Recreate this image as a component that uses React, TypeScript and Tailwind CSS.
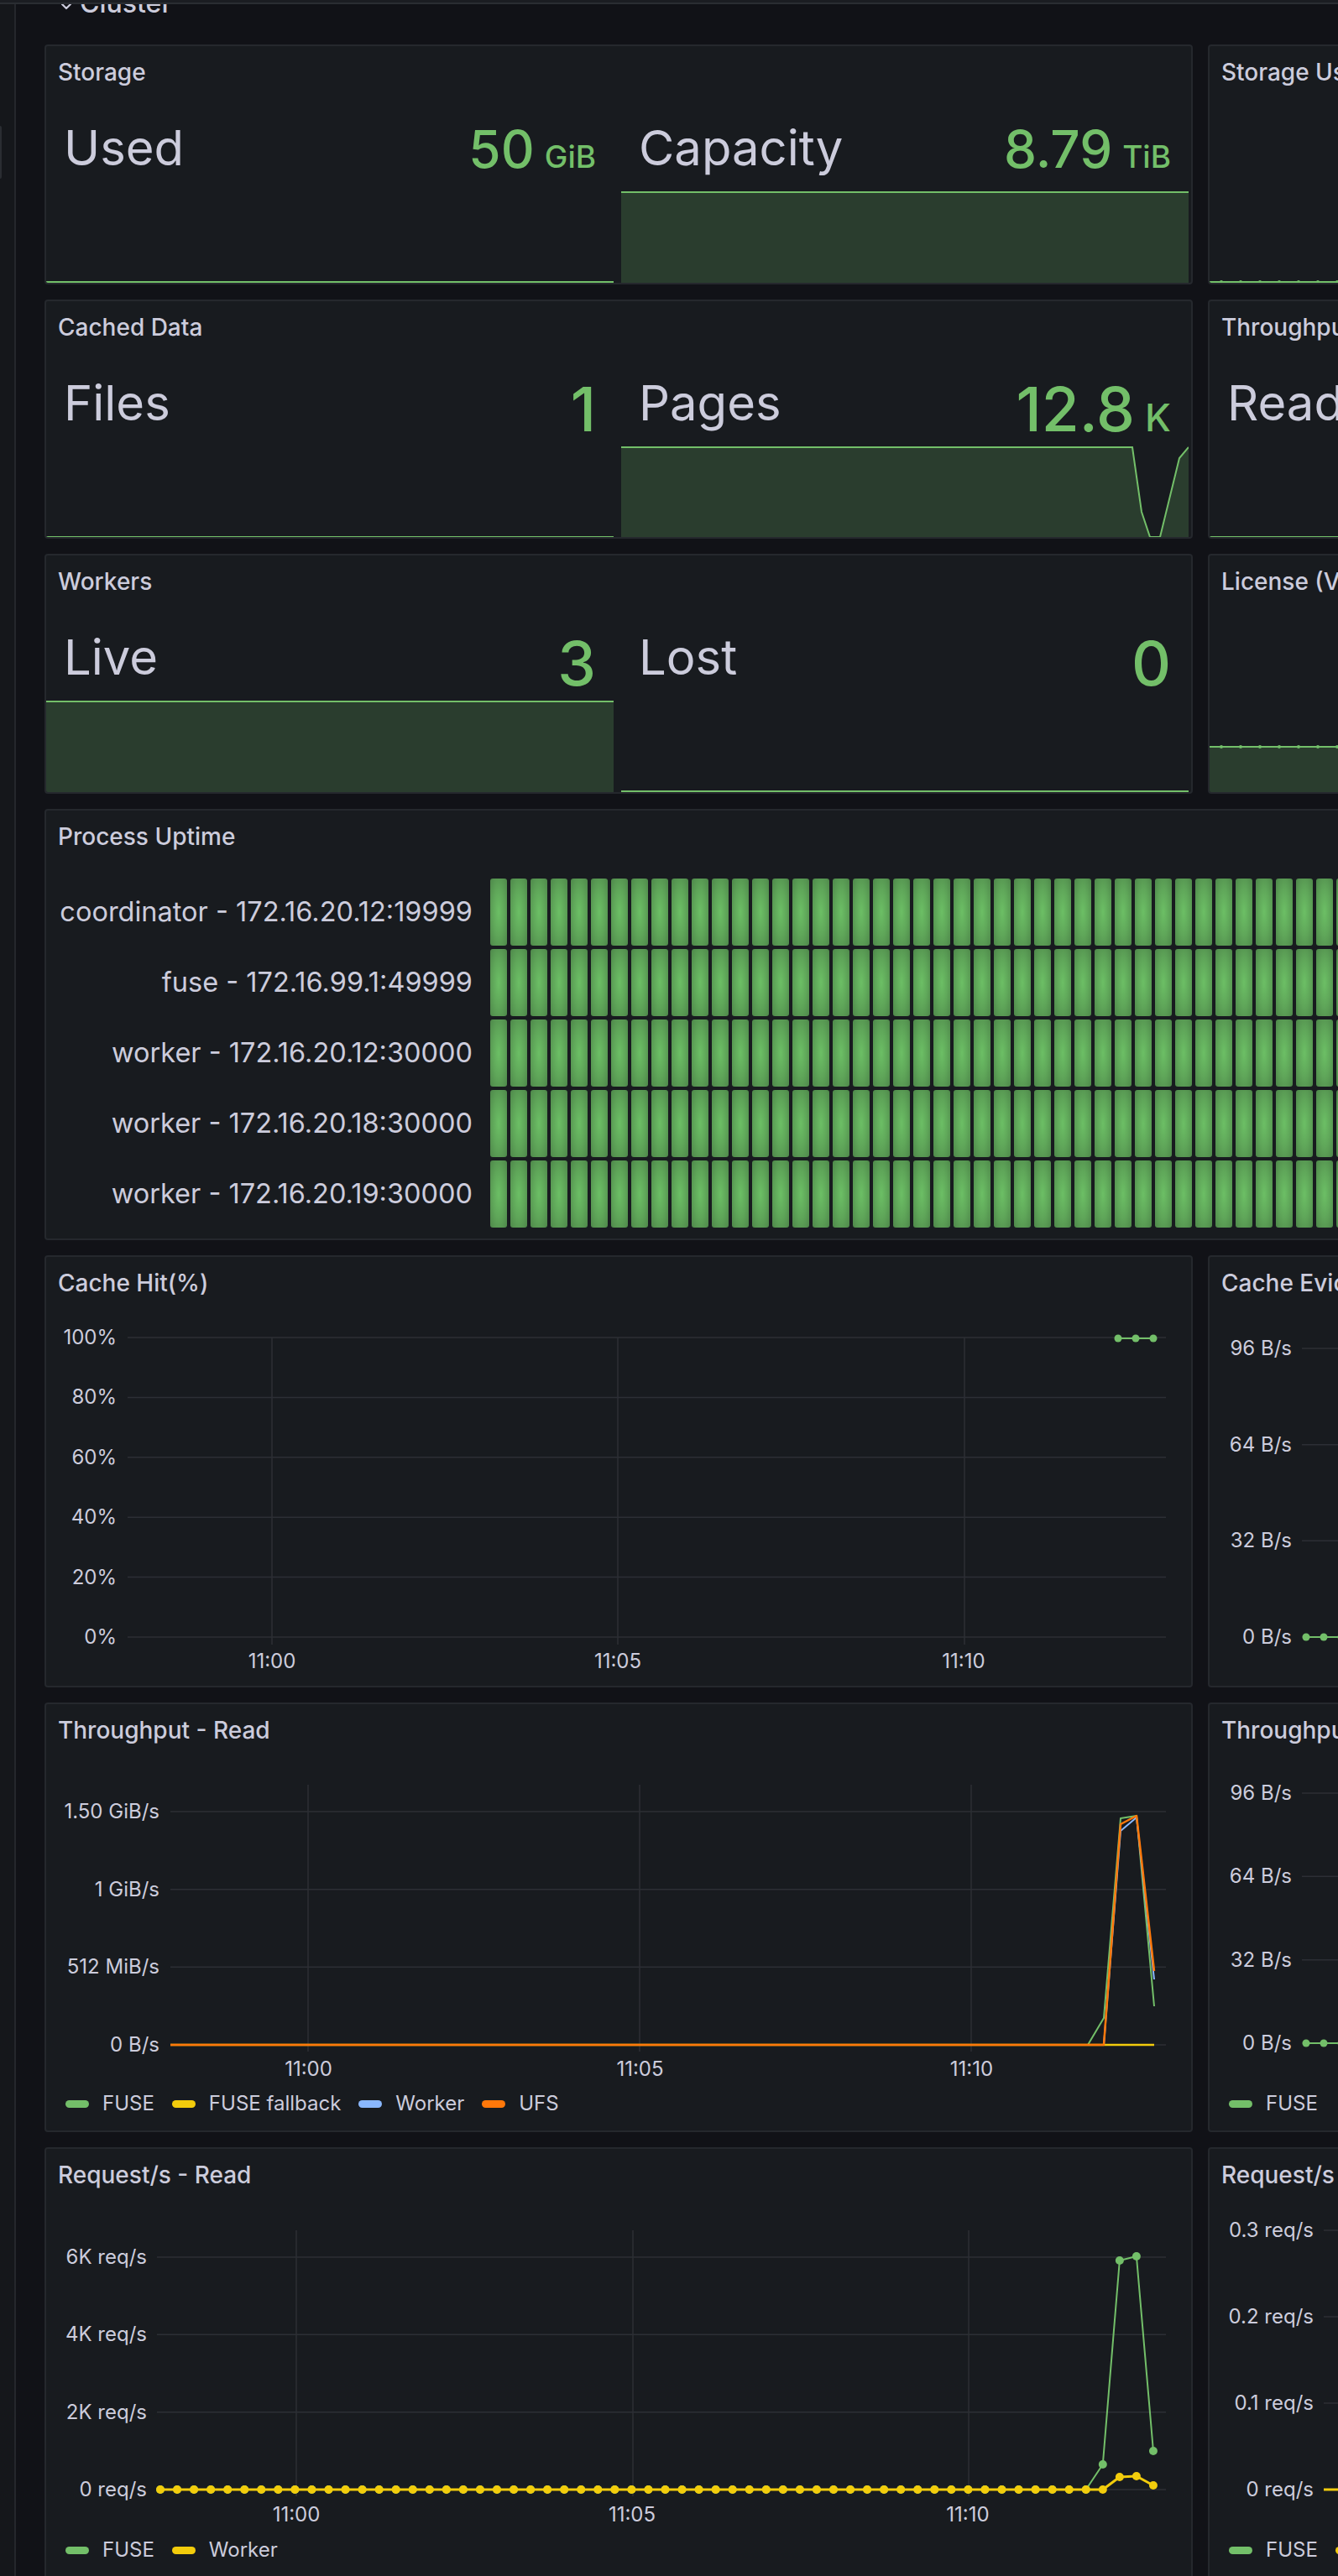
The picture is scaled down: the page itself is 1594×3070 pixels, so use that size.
import React from "react";

type Pt = [number, number];
type Series = { color: string; pts: Pt[]; dots?: boolean; r?: number; w?: number };

const GREEN = "#73bf69";
const YELLOW = "#f2cc0c";
const BLUE = "#8ab8ff";
const ORANGE = "#ff780a";

// panel frame with grafana-like header
function Panel({ title, className = "", children }: { title: string; className?: string; children?: React.ReactNode }) {
  return (
    <div className={`flex shrink-0 flex-col overflow-hidden rounded-[4px] border-2 border-[#25282d] bg-[#181b1f] ${className}`}>
      <div className="flex h-[62px] shrink-0 items-center whitespace-nowrap px-[14px] text-[28px] font-medium leading-none text-[#ccccdc]">
        {title}
      </div>
      {children}
    </div>
  );
}

function Spark({ kind, width = 676, pts }: { kind: "flat" | "full" | "path"; width?: number; pts?: Pt[] }) {
  const h = 109;
  let line: Pt[];
  if (kind === "flat") line = [[0, 108], [width, 108]];
  else if (kind === "full") line = [[0, 1], [width, 1]];
  else line = pts || [];
  const d = line.map((p, i) => `${i ? "L" : "M"}${p[0]} ${p[1]}`).join(" ");
  return (
    <svg width={width} height={h} className="block shrink-0">
      {kind !== "flat" && <path d={`${d} L${width} ${h} L0 ${h} Z`} fill={GREEN} fillOpacity={0.21} />}
      <path d={d} fill="none" stroke={GREEN} strokeWidth={2} />
    </svg>
  );
}

function StatItem(props: { name: string; value?: string; unit?: string; valueCls?: string; unitCls?: string; spark: React.ReactNode }) {
  const { name, value, unit, valueCls = "", unitCls = "", spark } = props;
  return (
    <div className="flex min-w-0 flex-col">
      <div className="flex h-[111px] shrink-0 items-start justify-between whitespace-nowrap px-[21px] pt-[30px]">
        <span className="text-[58px] leading-none text-[#ccccdc]">{name}</span>
        {value && (
          <span className={`font-medium leading-none text-[#73bf69] ${valueCls}`}>
            {value}
            {unit && <span className={`ml-[12px] ${unitCls}`}>{unit}</span>}
          </span>
        )}
      </div>
      {spark}
    </div>
  );
}

function YAxis({ labels, className }: { labels: string[]; className: string }) {
  return (
    <div className={`flex shrink-0 flex-col items-end justify-between whitespace-nowrap text-[24px] leading-none text-[#ccccdc] ${className}`}>
      {labels.map((l) => (
        <span key={l}>{l}</span>
      ))}
    </div>
  );
}

function XAxis({ labels, className, boxCls }: { labels: string[]; className: string; boxCls: string }) {
  return (
    <div className={`flex h-[24px] shrink-0 text-[24px] leading-none text-[#ccccdc] ${className}`}>
      {labels.map((l) => (
        <span key={l} className={`shrink-0 text-center ${boxCls}`}>
          {l}
        </span>
      ))}
    </div>
  );
}

function Legend({ items, className }: { items: { label: string; cls: string }[]; className: string }) {
  return (
    <div className={`flex h-[24px] shrink-0 items-center gap-[21px] whitespace-nowrap pl-[23px] text-[24px] leading-none text-[#ccccdc] ${className}`}>
      {items.map((it) => (
        <div key={it.label} className="flex items-center gap-[16px]">
          <span className={`h-[9px] w-[28px] rounded-full ${it.cls}`} />
          {it.label}
        </div>
      ))}
    </div>
  );
}

function Chart(props: {
  vb: string;
  w: number;
  h: number;
  hLines: number[];
  x1: number;
  x2: number;
  vLines?: number[];
  vTop?: number;
  vBottom?: number;
  series: Series[];
}) {
  const { vb, w, h, hLines, x1, x2, vLines = [], vTop = 0, vBottom = 0, series } = props;
  return (
    <svg width={w} height={h} viewBox={vb} className="block shrink-0">
      {hLines.map((y) => (
        <line key={`h${y}`} x1={x1} x2={x2} y1={y} y2={y} stroke="#2c2f35" strokeWidth={1.5} />
      ))}
      {vLines.map((x) => (
        <line key={`v${x}`} x1={x} x2={x} y1={vTop} y2={vBottom} stroke="#2c2f35" strokeWidth={1.5} />
      ))}
      {series.map((s, i) => (
        <g key={i}>
          <polyline
            points={s.pts.map((p) => p.join(",")).join(" ")}
            fill="none"
            stroke={s.color}
            strokeWidth={s.w ?? 2}
            strokeLinejoin="round"
          />
          {s.dots && s.pts.map((p, j) => <circle key={j} cx={p[0]} cy={p[1]} r={s.r ?? 5} fill={s.color} />)}
        </g>
      ))}
    </svg>
  );
}

function dotsRow(start: number, step: number, end: number, y: number): Pt[] {
  const out: Pt[] = [];
  for (let x = start; x <= end; x += step) out.push([x, y]);
  return out;
}

// request/s read: 60 samples, spike at the end
const reqX = Array.from({ length: 60 }, (_, i) => 138 + i * 20.05);
const reqYellowY: Record<number, number> = { 57: 393, 58: 392, 59: 403 };
const reqGreenY: Record<number, number> = { 56: 378, 57: 135, 58: 130, 59: 362 };
const reqYellow: Pt[] = reqX.map((x, i) => [x, reqYellowY[i] ?? 408]);
const reqGreen: Pt[] = reqX.map((x, i) => [x, reqGreenY[i] ?? 408]);

const procs = [
  "coordinator - 172.16.20.12:19999",
  "fuse - 172.16.99.1:49999",
  "worker - 172.16.20.12:30000",
  "worker - 172.16.20.18:30000",
  "worker - 172.16.20.19:30000",
];
const bars = Array.from({ length: 54 }, (_, i) => i);

function TinyDots({ h, y, fill }: { h: number; y: number; fill?: boolean }) {
  const pts = dotsRow(14, 23, 448, y);
  return (
    <svg width={448} height={h} className="block shrink-0">
      {fill && <rect x={0} y={y} width={448} height={h - y} fill={GREEN} fillOpacity={0.21} />}
      <line x1={0} x2={448} y1={y} y2={y} stroke={GREEN} strokeWidth={2} />
      {pts.map((p) => (
        <circle key={p[0]} cx={p[0]} cy={p[1]} r={2} fill={GREEN} />
      ))}
    </svg>
  );
}

export default function App() {
  return (
    <div className="flex h-[3070px] w-[1594px] flex-col overflow-hidden bg-[#111217] [font-family:Inter,sans-serif]">
      <div className="h-[5px] shrink-0 border-b-2 border-[#2a2d32] bg-[#1b1d22]" />
      <div className="flex min-h-0 flex-1">
        {/* collapsed side menu */}
        <div className="flex w-[19px] shrink-0 flex-col border-r-2 border-[#25272c] bg-[#15171b]">
          <div className="mt-[145px] h-[63px] w-[2px] rounded-r bg-[#2a2d32]" />
        </div>

        <div className="flex min-w-0 flex-1 flex-col overflow-hidden pl-[34px]">
          {/* row header, scrolled under the nav */}
          <div className="flex h-[48px] shrink-0 items-start pl-[20px] text-[#ccccdc]">
            <svg width={12} height={12} className="mt-[-2px] shrink-0">
              <polyline points="1,2 6,7 11,2" fill="none" stroke="#ccccdc" strokeWidth={2.2} strokeLinecap="round" strokeLinejoin="round" />
            </svg>
            <span className="ml-[10px] mt-[-17px] text-[32px] font-medium leading-none">Cluster</span>
          </div>

          <div className="flex flex-col gap-[18px]">
            {/* storage */}
            <div className="flex shrink-0 gap-[18px]">
              <Panel title="Storage" className="h-[286px] w-[1368px]">
                <div className="grid grid-cols-2 gap-[9px] pr-[3px]">
                  <StatItem name="Used" value="50" unit="GiB" valueCls="text-[62px]" unitCls="text-[37px]" spark={<Spark kind="flat" />} />
                  <StatItem name="Capacity" value="8.79" unit="TiB" valueCls="text-[62px]" unitCls="text-[37px]" spark={<Spark kind="full" />} />
                </div>
              </Panel>
              <Panel title="Storage Usage" className="h-[286px] w-[450px]">
                <div className="mt-auto">
                  <TinyDots h={10} y={9} />
                </div>
              </Panel>
            </div>

            {/* cached data */}
            <div className="flex shrink-0 gap-[18px]">
              <Panel title="Cached Data" className="h-[285px] w-[1368px]">
                <div className="grid grid-cols-2 gap-[9px] pr-[3px]">
                  <StatItem name="Files" value="1" valueCls="text-[73px]" spark={<Spark kind="flat" />} />
                  <StatItem
                    name="Pages"
                    value="12.8"
                    unit="K"
                    valueCls="text-[73px]"
                    unitCls="text-[45px]"
                    spark={
                      <Spark
                        kind="path"
                        pts={[
                          [0, 1],
                          [609, 1],
                          [620, 78],
                          [630, 108],
                          [642, 108],
                          [665, 14],
                          [676, 1],
                        ]}
                      />
                    }
                  />
                </div>
              </Panel>
              <Panel title="Throughput" className="h-[285px] w-[450px]">
                <StatItem name="Read" spark={<Spark kind="flat" width={446} />} />
              </Panel>
            </div>

            {/* workers */}
            <div className="flex shrink-0 gap-[18px]">
              <Panel title="Workers" className="h-[286px] w-[1368px]">
                <div className="grid grid-cols-2 gap-[9px] pr-[3px]">
                  <StatItem name="Live" value="3" valueCls="text-[73px]" spark={<Spark kind="full" />} />
                  <StatItem name="Lost" value="0" valueCls="text-[73px]" spark={<Spark kind="flat" />} />
                </div>
              </Panel>
              <Panel title="License (Valid Days)" className="h-[286px] w-[450px]">
                <div className="mt-auto">
                  <TinyDots h={56} y={2} fill />
                </div>
              </Panel>
            </div>

            {/* process uptime */}
            <Panel title="Process Uptime" className="h-[514px] w-[1836px]">
              <div className="flex flex-col gap-[4px] pt-[19px]">
                {procs.map((p) => (
                  <div key={p} className="flex h-[80px] items-center gap-[21px]">
                    <div className="w-[508px] shrink-0 whitespace-nowrap text-right text-[32.5px] leading-none text-[#ccccdc]">{p}</div>
                    <div className="flex h-full gap-[4px]">
                      {bars.map((i) => (
                        <div
                          key={i}
                          className="h-full w-[20px] shrink-0 rounded-[3px] bg-[radial-gradient(ellipse_at_center,#6cbf65_0%,#5fa659_50%,#4e874a_100%)]"
                        />
                      ))}
                    </div>
                  </div>
                ))}
              </div>
            </Panel>

            {/* cache hit */}
            <div className="flex shrink-0 gap-[18px]">
              <Panel title="Cache Hit(%)" className="h-[515px] w-[1368px]">
                <div className="mt-[22px] flex h-[384px] shrink-0">
                  <YAxis labels={["100%", "80%", "60%", "40%", "20%", "0%"]} className="h-[381px] w-[84px]" />
                  <Chart
                    vb="86 86 1280 384"
                    w={1280}
                    h={384}
                    hLines={[98, 169.4, 240.8, 312.2, 383.6, 455]}
                    x1={99}
                    x2={1336}
                    vLines={[271, 683, 1096]}
                    vTop={98}
                    vBottom={464}
                    series={[{ color: GREEN, pts: [[1279, 99], [1300, 99], [1321, 99]], dots: true, r: 4.5 }]}
                  />
                </div>
                <XAxis labels={["11:00", "11:05", "11:10"]} className="mt-[2px] pl-[63px]" boxCls="w-[412px]" />
              </Panel>
              <Panel title="Cache Eviction" className="h-[515px] w-[450px]">
                <div className="mt-[35px] flex h-[372px] shrink-0">
                  <YAxis labels={["96 B/s", "64 B/s", "32 B/s", "0 B/s"]} className="h-[368px] w-[98px]" />
                  <Chart
                    vb="100 99 348 372"
                    w={348}
                    h={372}
                    hLines={[111, 225.7, 340.3, 455]}
                    x1={112}
                    x2={448}
                    series={[{ color: GREEN, pts: dotsRow(117, 21, 448, 455), dots: true, r: 4.5 }]}
                  />
                </div>
              </Panel>
            </div>

            {/* throughput */}
            <div className="flex shrink-0 gap-[18px]">
              <Panel title="Throughput - Read" className="h-[512px] w-[1368px]">
                <div className="mt-[34px] flex h-[326px] shrink-0">
                  <YAxis labels={["1.50 GiB/s", "1 GiB/s", "512 MiB/s", "0 B/s"]} className="mt-[20px] h-[302px] w-[135px]" />
                  <Chart
                    vb="137 98 1229 326"
                    w={1229}
                    h={326}
                    hLines={[130, 222.7, 315.3, 408]}
                    x1={150}
                    x2={1336}
                    vLines={[314, 709, 1104]}
                    vTop={98}
                    vBottom={416}
                    series={[
                      { color: GREEN, pts: [[150, 408], [1243, 408], [1262, 376], [1282, 138], [1301, 135], [1322, 362]] },
                      { color: YELLOW, pts: [[150, 408], [1322, 408]], w: 2.5 },
                      { color: BLUE, pts: [[150, 408], [1262, 408], [1282, 153], [1301, 137], [1322, 330]] },
                      { color: ORANGE, pts: [[150, 408], [1262, 408], [1282, 145], [1301, 135], [1322, 320]], w: 2.5 },
                    ]}
                  />
                </div>
                <XAxis labels={["11:00", "11:05", "11:10"]} className="mt-[1px] pl-[115px]" boxCls="w-[395px]" />
                <Legend
                  className="mt-[17px]"
                  items={[
                    { label: "FUSE", cls: "bg-[#73bf69]" },
                    { label: "FUSE fallback", cls: "bg-[#f2cc0c]" },
                    { label: "Worker", cls: "bg-[#8ab8ff]" },
                    { label: "UFS", cls: "bg-[#ff780a]" },
                  ]}
                />
              </Panel>
              <Panel title="Throughput - Write" className="h-[512px] w-[450px]">
                <div className="mt-[32px] flex h-[326px] shrink-0">
                  <YAxis labels={["96 B/s", "64 B/s", "32 B/s", "0 B/s"]} className="h-[322px] w-[98px]" />
                  <Chart
                    vb="100 96 348 326"
                    w={348}
                    h={326}
                    hLines={[108, 207.3, 306.7, 406]}
                    x1={112}
                    x2={448}
                    series={[{ color: GREEN, pts: dotsRow(117, 21, 448, 406), dots: true, r: 4.5 }]}
                  />
                </div>
                <Legend className="mt-[44px]" items={[{ label: "FUSE", cls: "bg-[#73bf69]" }]} />
              </Panel>
            </div>

            {/* request/s */}
            <div className="flex shrink-0 gap-[18px]">
              <Panel title="Request/s - Read" className="h-[560px] w-[1368px]">
                <div className="mt-[35px] flex h-[326px] shrink-0">
                  <YAxis labels={["6K req/s", "4K req/s", "2K req/s", "0 req/s"]} className="mt-[20px] h-[301px] w-[120px]" />
                  <Chart
                    vb="122 99 1244 326"
                    w={1244}
                    h={326}
                    hLines={[131, 223.3, 315.7, 408]}
                    x1={134}
                    x2={1336}
                    vLines={[300, 701, 1101]}
                    vTop={99}
                    vBottom={416}
                    series={[
                      { color: GREEN, pts: reqGreen, dots: true, r: 5, w: 2 },
                      { color: YELLOW, pts: reqYellow, dots: true, r: 5, w: 3 },
                    ]}
                  />
                </div>
                <XAxis labels={["11:00", "11:05", "11:10"]} className="mt-[1px] pl-[98px]" boxCls="w-[400px]" />
                <Legend
                  className="mt-[18px]"
                  items={[
                    { label: "FUSE", cls: "bg-[#73bf69]" },
                    { label: "Worker", cls: "bg-[#f2cc0c]" },
                  ]}
                />
              </Panel>
              <Panel title="Request/s - Write" className="h-[560px] w-[450px]">
                <div className="mt-[23px] flex h-[338px] shrink-0">
                  <YAxis labels={["0.3 req/s", "0.2 req/s", "0.1 req/s", "0 req/s"]} className="h-[333px] w-[124px]" />
                  <Chart
                    vb="126 87 322 338"
                    w={322}
                    h={338}
                    hLines={[99, 202, 305, 408]}
                    x1={138}
                    x2={448}
                    series={[{ color: YELLOW, pts: [[138, 408], ...dotsRow(153, 20, 448, 408)], dots: false, w: 3 }]}
                  />
                </div>
                <Legend
                  className="mt-[43px]"
                  items={[
                    { label: "FUSE", cls: "bg-[#73bf69]" },
                    { label: "Worker", cls: "bg-[#f2cc0c]" },
                  ]}
                />
              </Panel>
            </div>
          </div>
        </div>
      </div>
    </div>
  );
}
